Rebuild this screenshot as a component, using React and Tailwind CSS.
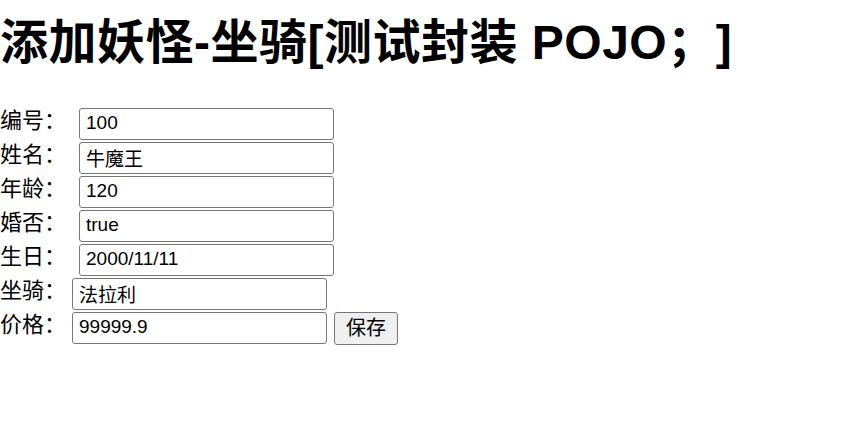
import React, { useState } from 'react';

const cjk = { fontFamily: '"Liberation Sans", "Noto Sans CJK SC", sans-serif' };

const rows = [
  { label: '编号：', name: 'id', value: '100', gap: 'ml-[13px]' },
  { label: '姓名：', name: 'name', value: '牛魔王', gap: 'ml-[13px]' },
  { label: '年龄：', name: 'age', value: '120', gap: 'ml-[13px]' },
  { label: '婚否：', name: 'isMarried', value: 'true', gap: 'ml-[13px]' },
  { label: '生日：', name: 'birthday', value: '2000/11/11', gap: 'ml-[13px]' },
  { label: '坐骑：', name: 'car.name', value: '法拉利', gap: 'ml-[6px]' },
  { label: '价格：', name: 'car.price', value: '99999.9', gap: 'ml-[6px]', submit: true },
];

export default function App() {
  const [form, setForm] = useState(() => Object.fromEntries(rows.map((r) => [r.name, r.value])));

  return (
    <div className="bg-white text-black min-h-[441px] w-full [text-spacing-trim:space-all]" style={cjk}>
      {/* Heading */}
      <h1 className="pt-[18px] text-[48px] leading-[49px] font-bold tracking-[0.5px] whitespace-nowrap">
        添加妖怪-坐骑[测试封装 POJO；]
      </h1>

      {/* Form */}
      <form className="mt-[40px] flex flex-col" onSubmit={(e) => e.preventDefault()}>
        {rows.map((r) => (
          <div key={r.name} className="flex items-center h-[34px]">
            <span className="w-[66px] text-[22px] leading-none -mt-[7px] whitespace-nowrap">{r.label}</span>
            <input
              name={r.name}
              value={form[r.name]}
              onChange={(e) => setForm({ ...form, [r.name]: e.target.value })}
              className={`${r.gap} w-[255px] h-[32px] border border-[#767676] rounded-[3px] pl-[6px] pb-[2px] text-[19px] text-black outline-none`}
              style={cjk}
            />
            {r.submit && (
              <button
                type="submit"
                className="ml-[7px] w-[64px] h-[33px] border border-[#767676] rounded-[3px] bg-[#efefef] text-[20px] leading-none"
                style={cjk}
              >
                保存
              </button>
            )}
          </div>
        ))}
      </form>
    </div>
  );
}
